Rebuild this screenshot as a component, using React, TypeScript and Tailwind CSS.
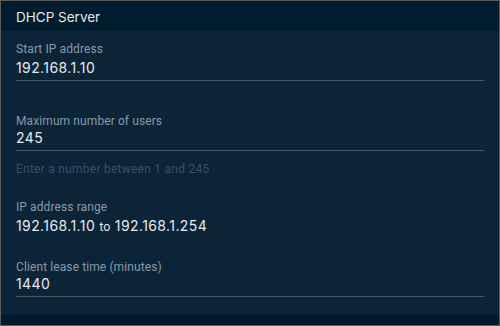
import React from "react";

const inter = { fontFamily: "Inter, 'Noto Sans', sans-serif" };
const roboto = { fontFamily: "Roboto, 'Noto Sans', sans-serif" };

function Label({ children, className = "" }: { children: React.ReactNode; className?: string }) {
  return (
    <div style={roboto} className={`text-[12px] leading-[16px] tracking-[0.1px] text-[#8a99a6] ${className}`}>
      {children}
    </div>
  );
}
function Value({ children, className = "" }: { children: React.ReactNode; className?: string }) {
  return (
    <div style={inter} className={`text-[14px] leading-[18px] tracking-[0.4px] text-[#e6eaee] ${className}`}>
      {children}
    </div>
  );
}
function Line({ className = "" }: { className?: string }) {
  return <div className={`w-[468px] h-px bg-[#45596a] ${className}`} />;
}

export default function App() {
  return (
    <div style={inter} className="w-[500px] h-[326px] border border-[#5a5a5a] bg-[#0b2438] flex flex-col overflow-hidden">
      <div className="h-[30px] shrink-0 bg-[#001c2e] px-[15px] flex items-center pt-[2px]">
        <span className="text-[13.5px] text-[#e3e8ec]">DHCP Server</span>
      </div>
      <div className="flex-1 px-[15px] pt-[10px] flex flex-col">
        <Label>Start IP address</Label>
        <Value className="mt-[2px]">192.168.1.10</Value>
        <Line className="mt-[3px]" />

        <Label className="mt-[32px]">Maximum number of users</Label>
        <Value>245</Value>
        <Line className="mt-[3px]" />
        <div style={roboto} className="mt-[10px] text-[12px] leading-[16px] tracking-[0.25px] text-[#3a5164]">
          Enter a number between 1 and 245
        </div>

        <Label className="mt-[22px]">IP address range</Label>
        <Value className="mt-[2px]">
          192.168.1.10 <span className="text-[12px] tracking-normal">to</span> 192.168.1.254
        </Value>

        <Label className="mt-[23px]">Client lease time (minutes)</Label>
        <Value>1440</Value>
        <Line className="mt-[3px]" />
      </div>
      <div className="h-[10px] shrink-0 bg-[#001a2c]" />
    </div>
  );
}
